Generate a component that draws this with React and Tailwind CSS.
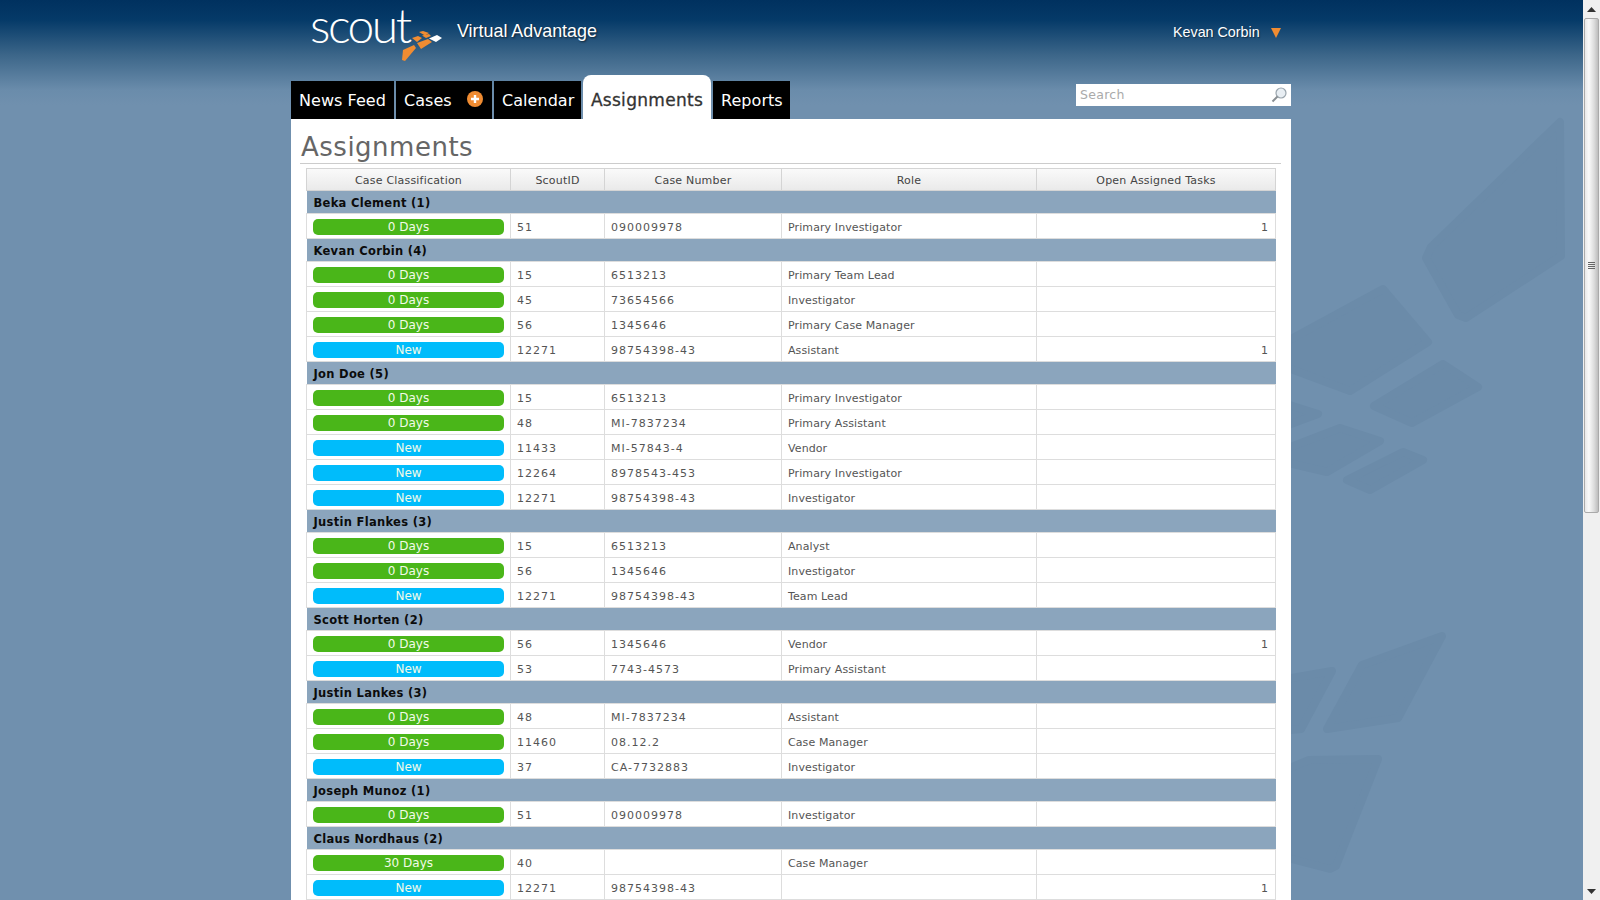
import React from "react";

const groups = [
  { name: "Beka Clement (1)", rows: [["0 Days", "51", "090009978", "Primary Investigator", "1"]] },
  {
    name: "Kevan Corbin (4)",
    rows: [
      ["0 Days", "15", "6513213", "Primary Team Lead", ""],
      ["0 Days", "45", "73654566", "Investigator", ""],
      ["0 Days", "56", "1345646", "Primary Case Manager", ""],
      ["New", "12271", "98754398-43", "Assistant", "1"],
    ],
  },
  {
    name: "Jon Doe (5)",
    rows: [
      ["0 Days", "15", "6513213", "Primary Investigator", ""],
      ["0 Days", "48", "MI-7837234", "Primary Assistant", ""],
      ["New", "11433", "MI-57843-4", "Vendor", ""],
      ["New", "12264", "8978543-453", "Primary Investigator", ""],
      ["New", "12271", "98754398-43", "Investigator", ""],
    ],
  },
  {
    name: "Justin Flankes (3)",
    rows: [
      ["0 Days", "15", "6513213", "Analyst", ""],
      ["0 Days", "56", "1345646", "Investigator", ""],
      ["New", "12271", "98754398-43", "Team Lead", ""],
    ],
  },
  {
    name: "Scott Horten (2)",
    rows: [
      ["0 Days", "56", "1345646", "Vendor", "1"],
      ["New", "53", "7743-4573", "Primary Assistant", ""],
    ],
  },
  {
    name: "Justin Lankes (3)",
    rows: [
      ["0 Days", "48", "MI-7837234", "Assistant", ""],
      ["0 Days", "11460", "08.12.2", "Case Manager", ""],
      ["New", "37", "CA-7732883", "Investigator", ""],
    ],
  },
  { name: "Joseph Munoz (1)", rows: [["0 Days", "51", "090009978", "Investigator", ""]] },
  {
    name: "Claus Nordhaus (2)",
    rows: [
      ["30 Days", "40", "", "Case Manager", ""],
      ["New", "12271", "98754398-43", "", "1"],
    ],
  },
];

const headers = ["Case Classification", "ScoutID", "Case Number", "Role", "Open Assigned Tasks"];

const Watermark = () => (
  <svg className="absolute left-0 top-0" width="1583" height="900" viewBox="0 0 1583 900" fill="#6b8ba9" stroke="#6b8ba9" strokeWidth="8" strokeLinejoin="round">
    <path d="M1560 122 L1561 256 L1466 318 L1458 315 L1426 258 L1431 247 Z" />
    <path d="M1383 289 L1428 342 L1350 391 L1280 365 L1280 345 Z" />
    <path d="M1443 364 L1478 387 L1412 423 L1374 406 Z" />
    <path d="M1280 402 L1318 414 L1280 428 Z" />
    <path d="M1340 428 L1380 441 L1327 472 L1280 461 L1280 451 Z" />
    <path d="M1403 452 L1423 460 L1370 490 L1347 480 Z" />
    <path d="M1442 636 L1398 718 L1327 729 L1362 665 Z" />
    <path d="M1332 671 L1301 729 L1280 731 L1280 680 Z" />
    <path d="M1378 759 L1336 866 L1330 869 L1280 856 L1280 772 L1309 760 Z" />
  </svg>
);

const ScoutMark = () => (
  <svg width="44" height="34" viewBox="400 29 44 34" className="absolute left-[109px] top-[29px]">
    <path d="M419 32 L423 31 L429 33 L425 35.5 Z" fill="#f08c32" />
    <path d="M422 35.5 L429 34 L431 36 L426 38 Z" fill="#f08c32" />
    <path d="M429 38.5 L437 35 L442 38 L436 42 Z" fill="#ffffff" />
    <path d="M412 38 L418 36 L422 38 L417 42 Z" fill="#f08c32" />
    <path d="M417 43 L428 39 L432 42 L421 49 Z" fill="#f08c32" />
    <path d="M403 50 L414 45 L416 48 L405 61 L402 60 Z" fill="#f08c32" />
  </svg>
);

const Tab = ({ label, active, children, className }) => (
  <div
    className={
      active
        ? "flex h-[44px] w-[128px] items-center justify-center rounded-t-[8px] bg-white pt-[8px] text-[17px] tracking-[0.3px] text-[#333] [-webkit-text-stroke:0.3px_#333]"
        : `flex h-[38px] items-center bg-black pl-[8px] pt-[2px] text-[16px] tracking-[0.05px] text-white ${className}`
    }
  >
    {label}
    {children}
  </div>
);

const Pill = ({ label }) => (
  <div
    className={`ml-[6px] flex h-[16px] w-[191px] items-center justify-center rounded-[5px] text-[12px] font-medium tracking-normal text-[#f2fbe8] ${
      label === "New" ? "bg-[#00bcfb]" : "bg-[#4ab619]"
    }`}
  >
    {label}
  </div>
);

export default function App() {
  return (
    <div className="flex h-screen overflow-hidden bg-[#7090ae] font-['DejaVu_Sans',sans-serif]">
      <div className="relative flex-1 overflow-hidden bg-[linear-gradient(to_bottom,#00315f_0px,#053a68_20px,#3c6689_55px,#6a8cab_90px,#7090ae_105px)]">
        <Watermark />
        <div className="relative ml-[291px] w-[1000px]">
          <div className="relative h-[75px]">
            <span className="absolute left-[19px] top-[1px] font-['Lato',sans-serif] text-[48px] font-light leading-[48px] tracking-[-2.5px] text-white">
              scout
            </span>
            <ScoutMark />
            <span className="absolute left-[166px] top-[18px] font-['Liberation_Sans',sans-serif] text-[17.9px] text-white [text-shadow:1px_1px_2px_rgba(0,0,0,0.6)]">
              Virtual Advantage
            </span>
            <div className="absolute left-[882px] top-[22px] flex items-center gap-[11px] font-['Liberation_Sans',sans-serif] text-[14.3px] text-white [text-shadow:1px_1px_1px_rgba(0,0,0,0.4)]">
              Kevan Corbin
              <svg width="10" height="10" viewBox="0 0 10 10">
                <path d="M0 0 H10 L5 10 Z" fill="#f08c32" />
              </svg>
            </div>
          </div>
          <div className="flex h-[44px] items-end justify-between">
            <div className="flex items-end gap-[2px]">
              <Tab label="News Feed" className="w-[103px]" />
              <Tab label="Cases" className="relative w-[96px]">
                <span className="absolute left-[71px] top-[10px] flex h-[16px] w-[16px] items-center justify-center rounded-full bg-[#f08c32]">
                  <svg width="10" height="10" viewBox="0 0 10 10">
                    <path d="M5 1 V9 M1 5 H9" stroke="#fff" strokeWidth="2.4" />
                  </svg>
                </span>
              </Tab>
              <Tab label="Calendar" className="w-[87px]" />
              <Tab label="Assignments" active />
              <Tab label="Reports" className="w-[77px]" />
            </div>
            <div className="mb-[13px] flex h-[22px] w-[215px] items-center justify-between bg-white pl-[4px] pr-[3px] text-[12.5px] tracking-[0.3px] text-[#aaa]">
              Search
              <svg width="18" height="18" viewBox="0 0 18 18" fill="none">
                <circle cx="11" cy="7" r="5" fill="#e8eef3" stroke="#9aa5ad" strokeWidth="1.2" />
                <path d="M7.5 10.5 L2.5 15.5" stroke="#8a8f93" strokeWidth="2" />
              </svg>
            </div>
          </div>
          <div className="bg-white pb-[40px] pl-[9px] pr-[10px]">
            <div className="h-[45px] border-b border-[#ccc] pl-[1px] pt-[12px]">
              <h1 className="text-[26px] leading-[33px] tracking-[0.5px] text-[#666]">Assignments</h1>
            </div>
            <div className="pl-[6px] pt-[4px]">
              <table className="w-[969px] table-fixed border-collapse text-[11px] tracking-[0.1px] text-[#555]">
                <colgroup>
                  <col className="w-[204px]" />
                  <col className="w-[94px]" />
                  <col className="w-[177px]" />
                  <col className="w-[255px]" />
                  <col className="w-[239px]" />
                </colgroup>
                <thead>
                  <tr className="h-[22px] bg-[linear-gradient(to_bottom,#fafafa,#e9e9e9)]">
                    {headers.map((h) => (
                      <th key={h} className="border border-[#d4d4d4] p-0 pt-[4px] text-center font-normal tracking-[0.2px] text-[#444]">
                        {h}
                      </th>
                    ))}
                  </tr>
                </thead>
                <tbody>
                  {groups.map((g) => (
                    <React.Fragment key={g.name}>
                      <tr className="h-[23px] bg-[#8ba5bd]">
                        <td colSpan={5} className="px-[7px] pb-0 pt-[3px] text-[11.5px] font-bold tracking-[0.3px] text-[#0c0c0c]">
                          {g.name}
                        </td>
                      </tr>
                      {g.rows.map((r, i) => (
                        <tr key={i} className="h-[25px]">
                          <td className="border border-[#ddd] p-0 pt-[1px]">
                            <Pill label={r[0]} />
                          </td>
                          <td className="border border-[#ddd] px-[6px] pb-0 pt-[4px] tracking-[1px]">{r[1]}</td>
                          <td className="border border-[#ddd] px-[6px] pb-0 pt-[4px] tracking-[1px]">{r[2]}</td>
                          <td className="border border-[#ddd] px-[6px] pb-0 pt-[4px]">{r[3]}</td>
                          <td className="border border-[#ddd] px-[7px] pb-0 pt-[4px] text-right">{r[4]}</td>
                        </tr>
                      ))}
                    </React.Fragment>
                  ))}
                </tbody>
              </table>
            </div>
          </div>
        </div>
      </div>
      <div className="flex h-full w-[17px] flex-col items-center bg-[#f0f0f0]">
        <div className="flex h-[18px] items-center justify-center">
          <svg width="9" height="5" viewBox="0 0 9 5">
            <path d="M4.5 0 L9 5 H0 Z" fill="#333" />
          </svg>
        </div>
        <div className="flex h-[495px] w-[15px] flex-col items-center justify-center gap-[1px] rounded-[2px] border border-[#aaa] bg-[linear-gradient(to_right,#e8e8e8,#fafafa_30%,#dcdcdc_70%,#bdbdbd)]">
          <span className="h-px w-[7px] bg-[#666]" />
          <span className="h-px w-[7px] bg-[#666]" />
          <span className="h-px w-[7px] bg-[#666]" />
          <span className="h-px w-[7px] bg-[#666]" />
        </div>
        <div className="mt-auto flex h-[18px] items-center justify-center">
          <svg width="9" height="5" viewBox="0 0 9 5">
            <path d="M0 0 H9 L4.5 5 Z" fill="#333" />
          </svg>
        </div>
      </div>
    </div>
  );
}
